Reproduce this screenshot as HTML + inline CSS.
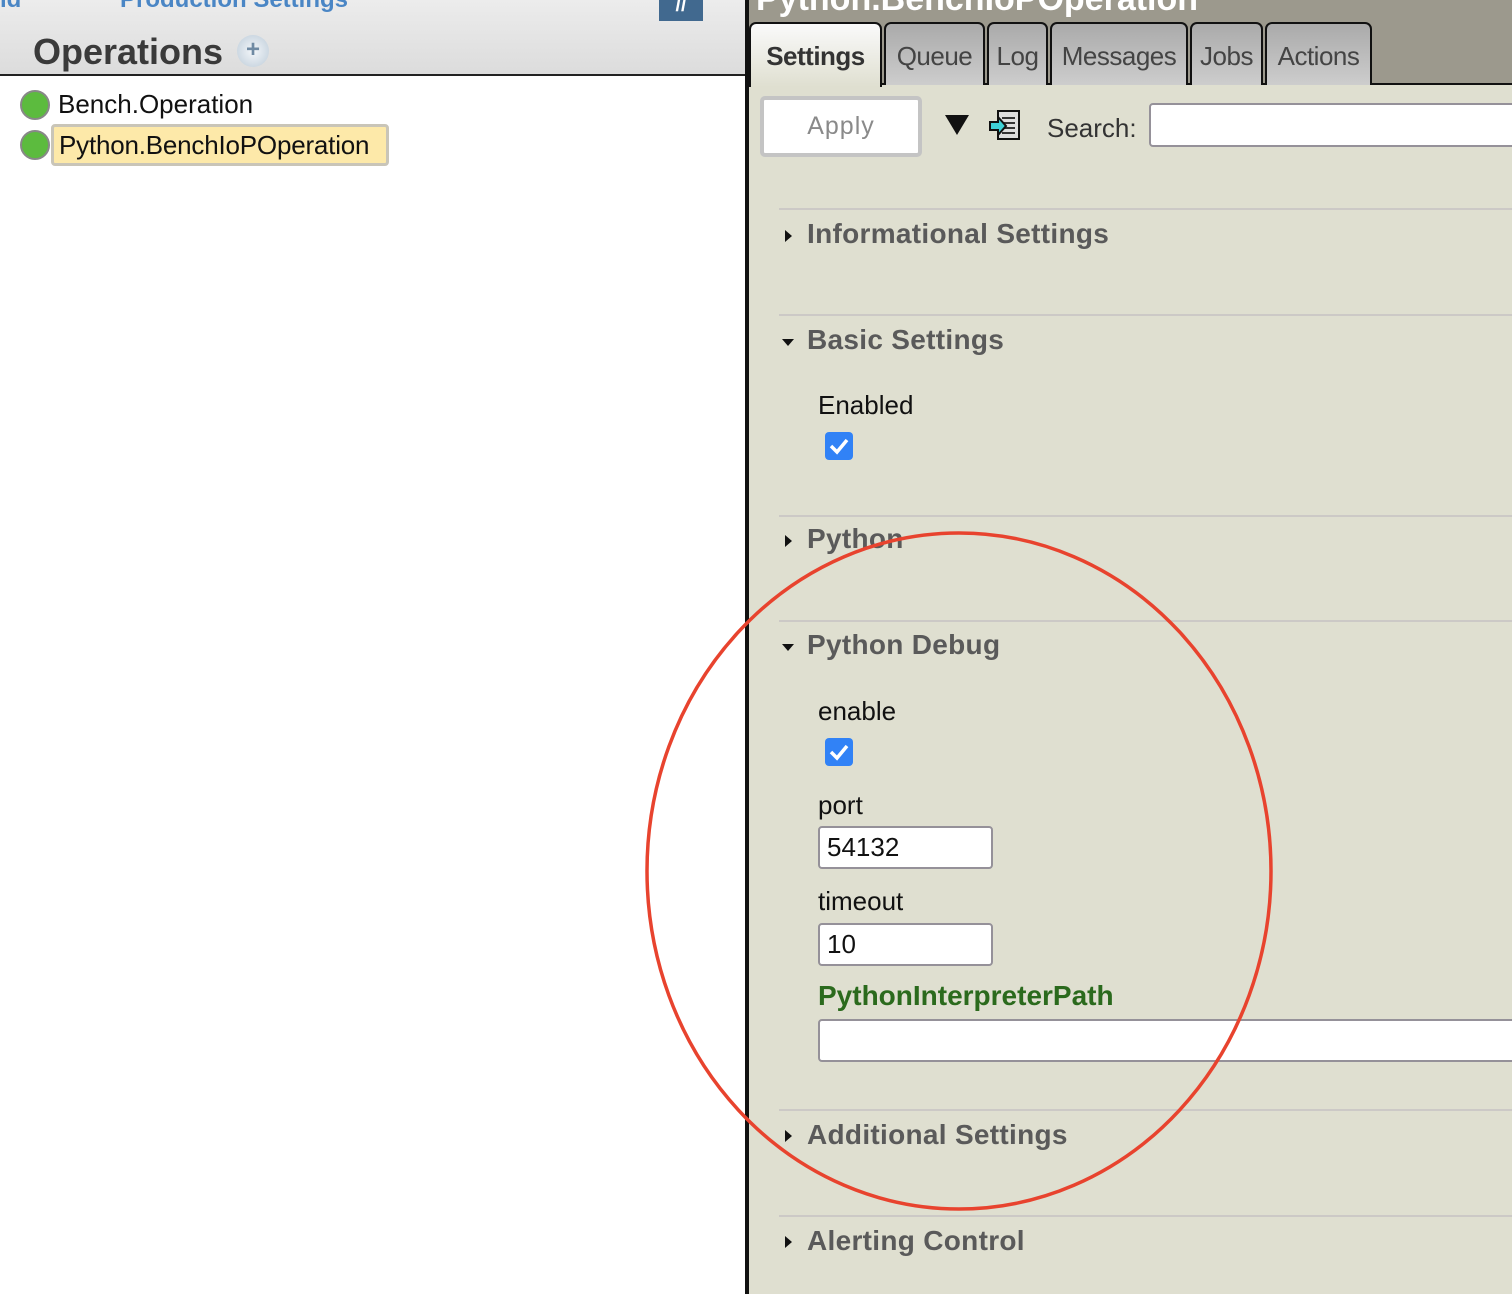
<!DOCTYPE html>
<html><head><meta charset="utf-8"><style>
*{margin:0;padding:0;box-sizing:border-box}
body{width:1512px;height:1294px;position:relative;overflow:hidden;font-family:"Liberation Sans",sans-serif;background:#fff}
.a{position:absolute}
.lh{left:0;top:0;width:745px;height:76px;background:linear-gradient(#ececec,#dcdcdc);border-bottom:2px solid #222}
.rp{left:745px;top:0;width:767px;height:1294px;background:#dfdfd0;border-left:4px solid #111}
.top{left:749px;top:0;width:763px;height:85px;background:#9c998d;border-bottom:2px solid #111}
.tab{position:absolute;top:22px;height:63px;border:2px solid #111;border-bottom:none;border-radius:7px 7px 0 0;background:linear-gradient(#aaa,#cdcdcd);font-size:26px;color:#444;text-align:center;line-height:64px;letter-spacing:-0.5px}
.tab.on{background:linear-gradient(#fafafa,#dfdfd0);height:65px;font-weight:bold;color:#333}
.line{left:779px;width:733px;height:2px;background:#ccc9c6}
.h{left:807px;font-size:28px;font-weight:bold;color:#5a5a5a;letter-spacing:0.3px}
.tr{left:785px;width:0;height:0;border-top:6px solid transparent;border-bottom:6px solid transparent;border-left:7px solid #111}
.td{left:782px;width:0;height:0;border-left:6px solid transparent;border-right:6px solid transparent;border-top:7px solid #111}
.lb{left:818px;font-size:26px;color:#111}
.cb{left:825px;width:28px;height:28px;border-radius:4px;background:#3182f6}
.in{left:818px;height:43px;background:#fff;border:2px solid #959199;border-radius:4px;font-size:26px;padding-left:7px;line-height:38px;color:#111}
.dot{left:20px;width:30px;height:30px;border-radius:50%;background:#5cbb3e;border:2px solid #888}
</style></head><body>
<div class="a lh"></div>
<div class="a" style="left:0;top:-14px;font-size:24px;font-weight:bold;color:#4a86c5">ld</div>
<div class="a" style="left:120px;top:-14px;font-size:24px;font-weight:bold;color:#4a86c5">Production Settings</div>
<div class="a" style="left:659px;top:0;width:44px;height:21px;background:#41698f;color:#fff;font-size:20px;font-weight:bold;text-align:center;line-height:10px">//</div>
<div class="a" style="left:33px;top:31px;font-size:36px;font-weight:bold;color:#3a3a3a">Operations</div>
<div class="a" style="left:237px;top:35px;width:32px;height:32px;border-radius:50%;background:radial-gradient(#f4f7fa,#bccbd8);color:#6f8aa3;font-size:24px;font-weight:bold;text-align:center;line-height:30px">+</div>
<div class="a dot" style="top:90px"></div>
<div class="a" style="left:58px;top:89px;font-size:26px;color:#111">Bench.Operation</div>
<div class="a dot" style="top:130px"></div>
<div class="a" style="left:51px;top:124px;width:338px;height:42px;background:#fde9a9;border:3px solid #c9c5b8;border-radius:4px;font-size:26px;color:#111;padding-left:5px;line-height:36px;white-space:nowrap;letter-spacing:-0.2px">Python.BenchIoPOperation</div>

<div class="a rp"></div>
<div class="a top"></div>
<div class="a" style="left:756px;top:-20px;font-size:34px;font-weight:bold;color:#fff">Python.BenchIoPOperation</div>
<div class="tab on" style="left:749px;width:133px">Settings</div>
<div class="tab" style="left:884px;width:101px">Queue</div>
<div class="tab" style="left:987px;width:61px">Log</div>
<div class="tab" style="left:1050px;width:138px">Messages</div>
<div class="tab" style="left:1190px;width:73px">Jobs</div>
<div class="tab" style="left:1265px;width:107px">Actions</div>

<div class="a" style="left:760px;top:96px;width:162px;height:61px;background:#fff;border:4px solid #c4c4c4;border-radius:5px;font-size:25px;color:#8a8a8a;text-align:center;line-height:53px;letter-spacing:1px">Apply</div>
<div class="a" style="left:945px;top:115px;width:0;height:0;border-left:12px solid transparent;border-right:12px solid transparent;border-top:20px solid #111"></div>
<svg class="a" style="left:988px;top:110px" width="34" height="32" viewBox="0 0 34 32"><rect x="10" y="1" width="21" height="28" fill="#ddd" stroke="#111" stroke-width="2"/><path d="M14 8h13M14 13h13M14 18h13M14 23h13" stroke="#333" stroke-width="2"/><path d="M2 12h8v-5l8 9-8 9v-5H2z" fill="#3ed1d6" stroke="#111" stroke-width="2"/></svg>
<div class="a" style="left:1047px;top:113px;font-size:26px;color:#333">Search:</div>
<div class="a" style="left:1149px;top:103px;width:370px;height:44px;background:#fff;border:2px solid #959199;border-radius:4px"></div>

<div class="a line" style="top:208px"></div>
<div class="a tr" style="left:785px;top:230px"></div>
<div class="a h" style="top:218px">Informational Settings</div>
<div class="a line" style="top:314px"></div>
<div class="a td" style="top:339px"></div>
<div class="a h" style="top:324px">Basic Settings</div>
<div class="a lb" style="top:390px">Enabled</div>
<div class="a cb" style="top:432px"><svg width="28" height="28"><path d="M6 14l6 6 10-12" stroke="#fff" stroke-width="3.5" fill="none"/></svg></div>
<div class="a line" style="top:515px"></div>
<div class="a tr" style="left:785px;top:535px"></div>
<div class="a h" style="top:523px">Python</div>
<div class="a line" style="top:620px"></div>
<div class="a td" style="top:644px"></div>
<div class="a h" style="top:629px">Python Debug</div>
<div class="a lb" style="top:696px">enable</div>
<div class="a cb" style="top:738px"><svg width="28" height="28"><path d="M6 14l6 6 10-12" stroke="#fff" stroke-width="3.5" fill="none"/></svg></div>
<div class="a lb" style="top:790px">port</div>
<div class="a in" style="top:826px;width:175px">54132</div>
<div class="a lb" style="top:886px">timeout</div>
<div class="a in" style="top:923px;width:175px">10</div>
<div class="a" style="left:818px;top:980px;font-size:28px;font-weight:bold;color:#2b6a1d">PythonInterpreterPath</div>
<div class="a in" style="top:1019px;width:700px"></div>
<div class="a line" style="top:1109px"></div>
<div class="a tr" style="left:785px;top:1130px"></div>
<div class="a h" style="top:1119px">Additional Settings</div>
<div class="a line" style="top:1215px"></div>
<div class="a tr" style="left:785px;top:1236px"></div>
<div class="a h" style="top:1225px">Alerting Control</div>

<svg class="a" style="left:0;top:0" width="1512" height="1294"><ellipse cx="959" cy="871" rx="312" ry="338" fill="none" stroke="#e8432e" stroke-width="3.5"/></svg>
</body></html>
